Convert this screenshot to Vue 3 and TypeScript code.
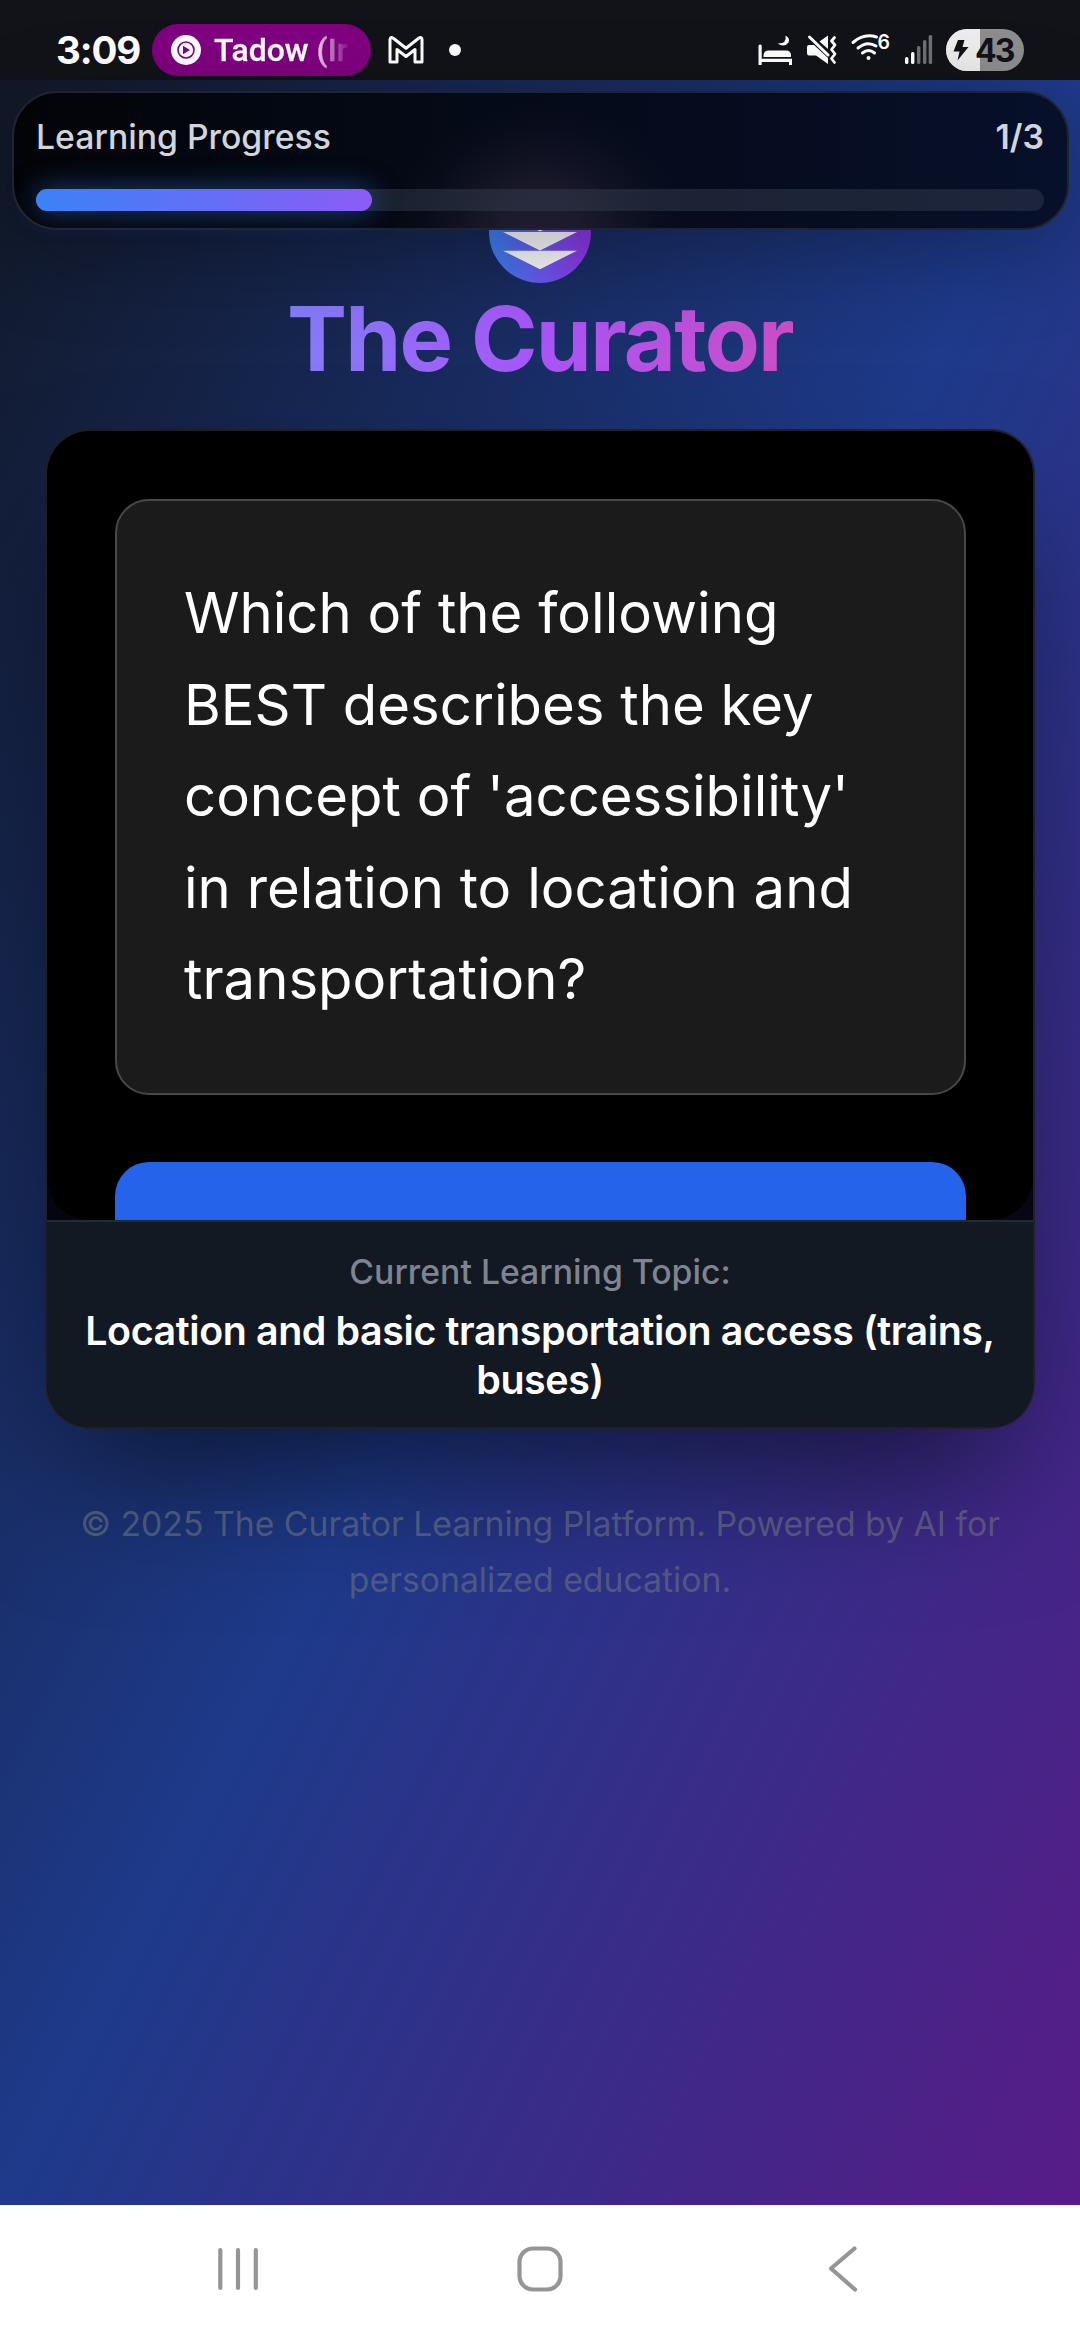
<script setup lang="ts">
const bars: { x: number; y: number; on: boolean }[] = [
  { x: 905, y: 57, on: true },
  { x: 911, y: 52, on: true },
  { x: 917, y: 46, on: false },
  { x: 923, y: 40, on: false },
  { x: 928.7, y: 35, on: false },
]
const step = 1
const total = 3
</script>

<template>
  <div class="screen">
    <header class="status">
      <span class="time">3:09</span>
      <div class="pill">
        <svg width="30" height="30" viewBox="0 0 30 30">
          <circle cx="15" cy="15" r="15" fill="#fff" />
          <circle cx="15" cy="15" r="8" fill="none" stroke="#800080" stroke-width="1.6" />
          <path d="M12 10.8 L19 15 L12 19.2Z" fill="#800080" />
        </svg>
        <span class="song">Tadow (Ir</span>
      </div>
      <svg class="mail" width="36" height="28" viewBox="0 0 36 28">
        <path d="M2 26V3.4Q2.5.6 5 2L18 12.300L31 2Q33.500.6 34 3.400V26H27V13.500L18 20.500L9 13.500V26Z" fill="none" stroke="#fff" stroke-width="3" stroke-linejoin="round" />
      </svg>
      <i class="dot"></i>
      <svg class="sys" width="280" height="50" viewBox="750 25 280 50">
        <g fill="#fff">
          <path d="M758.500 45.500q1.600-2 3.200 0V58.700H792V65h-3v-3H761.700v3h-3.200Z" />
          <path d="M763.500 57V55Q764 50.500 768.500 50.500H786Q791 50.500 791 55.500V57Z" />
          <path d="M785.500 35.500Q790.500 38 788.500 42.500Q784.500 48 777.500 43.500Q787 44 785.500 35.500Z" />
          <path d="M807 47q0-2 2-2h5L828 58V64L816 55.500H809Q807 55.500 807 53Z" />
          <path d="M819.500 41.500L828 35.500V49Z" />
        </g>
        <path d="M809.500 37L828 55" stroke="#fff" stroke-width="3" stroke-linecap="round" />
        <path d="M834.500 37.500l-3 3.500 3.500 4-3.500 4.500 3.500 4.500-3.500 4.500 3 4" fill="none" stroke="#fff" stroke-width="2.800" stroke-linecap="round" stroke-linejoin="round" />
        <g fill="none" stroke="#fff" stroke-width="3" stroke-linecap="round">
          <path d="M853 42.500Q864 33 876.500 37" />
          <path d="M858 48Q867 40.500 876 46" />
          <path d="M862.500 53Q868.500 48 874.500 53" />
        </g>
        <circle cx="868.500" cy="58" r="2" fill="#fff" />
        <text x="877.500" y="48.500" class="six">6</text>
        <rect v-for="b in bars" :key="b.x" :x="b.x" :y="b.y" width="3.400" :height="64 - b.y" rx="1.500" :fill="b.on ? '#fff' : '#707176'" />
        <defs>
          <clipPath id="bat"><rect x="946" y="29" width="78" height="42" rx="21" /></clipPath>
        </defs>
        <g clip-path="url(#bat)">
          <rect x="946" y="29" width="78" height="42" fill="#8e8e91" />
          <rect x="946" y="29" width="34" height="42" fill="#ededee" />
        </g>
        <path d="M958 40H964.500L962.500 47H968.500L957.500 60.500L959.500 51.500H953.500Z" fill="#121318" />
        <text x="975" y="61.500" class="level">43</text>
      </svg>
    </header>

    <main class="page">
      <section class="progress">
        <div class="row">
          <span class="label">Learning Progress</span>
          <span class="count">{{ step }}/{{ total }}</span>
        </div>
        <div class="track">
          <div class="fill" :style="{ width: (step / total) * 100 + '%' }"></div>
        </div>
      </section>

      <div class="brand">
        <svg class="logo" width="102" height="102" viewBox="0 0 102 102">
          <defs>
            <linearGradient id="lg" x1="0" y1="0" x2="1" y2="0">
              <stop offset="0" stop-color="#3b82f6" />
              <stop offset="1" stop-color="#9333ea" />
            </linearGradient>
          </defs>
          <circle cx="51" cy="51" r="51" fill="url(#lg)" />
          <g fill="#fff" fill-opacity="0.98">
            <path d="M14 32H88L51 50.500Z" />
            <path d="M14 51H88L51 69.500Z" />
            <path d="M14 69.700H88L51 88.200Z" />
          </g>
        </svg>
        <h1>The Curator</h1>
      </div>

      <section class="card">
        <div class="quiz">
          <p class="question">
            Which of the following<br />BEST describes the key<br />concept of 'accessibility'<br />in relation to location and<br />transportation?
          </p>
          <div class="answer"></div>
        </div>
        <footer class="topic">
          <span class="caption">Current Learning Topic:</span>
          <strong>Location and basic transportation access (trains,<br />buses)</strong>
        </footer>
      </section>

      <p class="legal">© 2025 The Curator Learning Platform. Powered by AI for<br />personalized education.</p>
    </main>

    <nav class="nav">
      <svg width="1080" height="135" viewBox="0 2205 1080 135" fill="none" stroke="#959595" stroke-width="4.200" stroke-linecap="round" stroke-linejoin="round">
        <path d="M220.300 2250V2288M238 2250V2288M255.800 2250V2288" />
        <rect x="519.500" y="2248.500" width="41" height="41" rx="13.500" />
        <path d="M854.500 2248.500L831 2268.500L855 2289.500" />
      </svg>
    </nav>
  </div>
</template>

<style>
body {
  margin: 0;
}
</style>

<style scoped>
.screen {
  width: 1080px;
  height: 2340px;
  display: flex;
  flex-direction: column;
  overflow: hidden;
  font-family: Inter, "Noto Sans", sans-serif;
}
.status {
  height: 80px;
  flex: none;
  background: #121318;
  display: flex;
  align-items: center;
  padding: 20px 50px 0 56px;
  box-sizing: border-box;
  color: #fff;
}
.time {
  width: 96px;
  font: 700 38.500px/52px Inter, sans-serif;
  letter-spacing: -1.100px;
}
.pill {
  width: 219px;
  height: 52px;
  border-radius: 26px;
  background: #800080;
  display: flex;
  align-items: center;
  padding-left: 19px;
  box-sizing: border-box;
}
.song {
  margin-left: 13px;
  width: 137px;
  overflow: hidden;
  white-space: nowrap;
  font: 500 32px/50px Roboto, sans-serif;
  -webkit-text-stroke: 0.4px transparent;
  background: linear-gradient(90deg, #fff 70%, #80008000 100%);
  background-clip: text;
  color: transparent;
}
.mail {
  margin-left: 17px;
}
.dot {
  width: 12px;
  height: 12px;
  border-radius: 50%;
  background: #fff;
  margin-left: 25px;
}
.sys {
  margin-left: auto;
}
.six {
  font: 600 19.500px Inter, sans-serif;
  fill: #fff;
}
.level {
  font: 700 32px Inter, sans-serif;
  letter-spacing: -2px;
  fill: #121318;
}
.page {
  flex: none;
  height: 2125px;
  box-sizing: border-box;
  display: flex;
  flex-direction: column;
  align-items: center;
  padding-top: 11px;
  background: linear-gradient(to bottom right, #111827, #1e3a8a 50%, #581c87);
}
.progress {
  position: relative;
  z-index: 2;
  width: 1057px;
  height: 139px;
  flex: none;
  box-sizing: border-box;
  border: 2px solid #20242f;
  border-radius: 45px;
  padding: 20px 22.500px 0;
  background:
    radial-gradient(150px 125px at 50% 100%, #1e1c2e 0%, rgba(30, 28, 46, 0.9) 25%, rgba(30, 28, 46, 0.45) 55%, rgba(30, 28, 46, 0.12) 80%, transparent 100%),
    linear-gradient(90deg, #030408, #040914 35%, #060c1e 65%, #07102a);
  box-shadow: 0 22px 90px rgba(0, 0, 0, 0.3);
}
.row {
  display: flex;
  justify-content: space-between;
  height: 48px;
  font-size: 33.750px;
  line-height: 48px;
  color: #d1d5db;
}
.label {
  font-weight: 500;
}
.count {
  font-weight: 600;
}
.track {
  margin-top: 28px;
  height: 22px;
  border-radius: 11px;
  background: rgba(55, 65, 81, 0.45);
}
.fill {
  height: 100%;
  border-radius: 11px;
  background: linear-gradient(90deg, #3b82f6, #8b5cf6);
  box-shadow: 0 0 28px rgba(59, 130, 246, 0.5);
}
.brand {
  margin-top: -49px;
  height: 248px;
  flex: none;
  width: 990px;
  display: flex;
  flex-direction: column;
  align-items: center;
}
.logo {
  flex: none;
}
h1 {
  margin: 0;
  width: 990px;
  text-align: center;
  font-size: 90px;
  line-height: 111px;
  font-weight: 700;
  letter-spacing: -1.750px;
  background: linear-gradient(90deg, #60a5fa, #a855f7 50%, #ec4899);
  background-clip: text;
  color: transparent;
}
.card {
  width: 990px;
  height: 1000px;
  flex: none;
  box-sizing: border-box;
  border: 2px solid rgba(255, 255, 255, 0.1);
  border-radius: 45px;
  overflow: hidden;
  background: rgba(0, 0, 0, 0.85);
  box-shadow: 0 70px 141px -34px rgba(0, 0, 0, 0.6);
}
.quiz {
  height: 789px;
  overflow: hidden;
  box-sizing: border-box;
  padding: 68px 67.500px 0;
  background: #000;
  border-radius: 43px;
}
.question {
  margin: 0;
  height: 596px;
  box-sizing: border-box;
  border: 2px solid #484848;
  border-radius: 34px;
  background: #1b1b1b;
  padding: 67.300px 67.500px;
  color: #fff;
  font-size: 56.250px;
  line-height: 91.400px;
  white-space: nowrap;
}
.answer {
  margin-top: 67px;
  height: 160px;
  border-radius: 34px;
  background: #2563eb;
}
.topic {
  height: 207px;
  box-sizing: border-box;
  border-top: 2px solid #232935;
  background: #121922;
  display: flex;
  flex-direction: column;
  align-items: center;
  padding-top: 26px;
}
.caption {
  font-size: 33.750px;
  line-height: 48px;
  font-weight: 500;
  color: #7f8490;
}
.topic strong {
  margin-top: 10px;
  font-size: 39.375px;
  line-height: 49.200px;
  font-weight: 600;
  letter-spacing: -0.394px;
  color: #fff;
  text-align: center;
  white-space: nowrap;
}
.legal {
  margin: 67px 0 0;
  text-align: center;
  font-size: 33.750px;
  line-height: 56px;
  color: rgba(107, 114, 128, 0.6);
  white-space: nowrap;
}
.nav {
  flex: none;
  height: 135px;
  background: #fff;
}
.nav svg {
  display: block;
}
</style>
